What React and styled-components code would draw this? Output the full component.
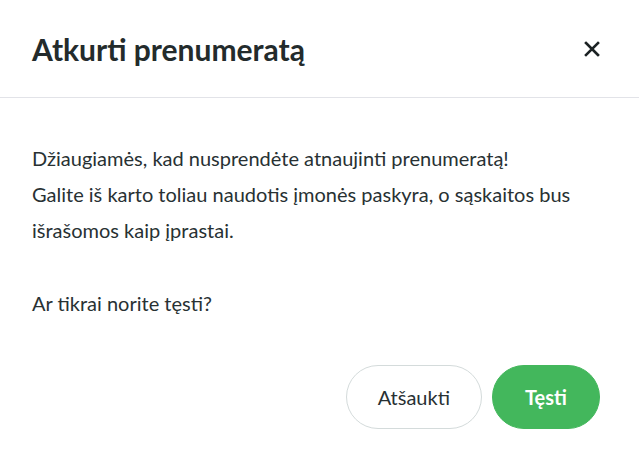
import React from "react"
import styled, { createGlobalStyle } from "styled-components"

const GlobalStyle = createGlobalStyle`
  html, body {
    margin: 0;
    padding: 0;
    background: #fff;
  }
  body {
    font-family: Lato, "Noto Sans", sans-serif;
    color: #283133;
  }
`

const App = () => {
  return (
    <>
      <GlobalStyle />
      <Modal>
        <Header>
          <Title>Atkurti prenumeratą</Title>
          <CloseButton aria-label="Uždaryti">
            <svg width="16" height="16" viewBox="0 0 16 16">
              <path
                d="M2 2 L14 14 M14 2 L2 14"
                stroke="#1c2224"
                strokeWidth="2.6"
                strokeLinecap="square"
              />
            </svg>
          </CloseButton>
        </Header>
        <Body>
          <Text>
            Džiaugiamės, kad nusprendėte atnaujinti prenumeratą!
            <br />
            Galite iš karto toliau naudotis įmonės paskyra, o sąskaitos bus
            išrašomos kaip įprastai.
          </Text>
          <Text>Ar tikrai norite tęsti?</Text>
        </Body>
        <Footer>
          <Button>Atšaukti</Button>
          <Button primary>Tęsti</Button>
        </Footer>
      </Modal>
    </>
  )
}

export default App

const Modal = styled.div`
  width: 639px;
  height: 464px;
  background: #fff;
  display: flex;
  flex-direction: column;
`

const Header = styled.div`
  height: 98px;
  display: flex;
  align-items: center;
  justify-content: space-between;
  padding: 0 39px 0 32px;
  border-bottom: 1px solid #e2e3e8;
  box-sizing: border-box;
`

const Title = styled.h2`
  margin: 0;
  font-size: 30px;
  font-weight: 700;
  color: #232b2c;
`

const CloseButton = styled.button`
  border: none;
  background: none;
  padding: 0;
  display: flex;
  cursor: pointer;
`

const Body = styled.div`
  padding: 42px 32px 0;
`

const Text = styled.p`
  margin: 0 0 37px;
  font-size: 20px;
  line-height: 36px;
`

const Footer = styled.div`
  display: flex;
  justify-content: flex-end;
  gap: 10px;
  padding: 7px 39px 0 32px;
`

const Button = styled.button`
  height: 64px;
  padding: 0 ${(p) => (p.primary ? "32px" : "31px")};
  min-width: ${(p) => (p.primary ? "108px" : "135px")};
  border-radius: 32px;
  font-family: Lato, "Noto Sans", sans-serif;
  font-size: 20px;
  font-weight: ${(p) => (p.primary ? 700 : 400)};
  color: ${(p) => (p.primary ? "#fff" : "#283133")};
  background: ${(p) => (p.primary ? "#43b75c" : "#fff")};
  border: 1px solid ${(p) => (p.primary ? "#43b75c" : "#d4dbdb")};
  cursor: pointer;
`
